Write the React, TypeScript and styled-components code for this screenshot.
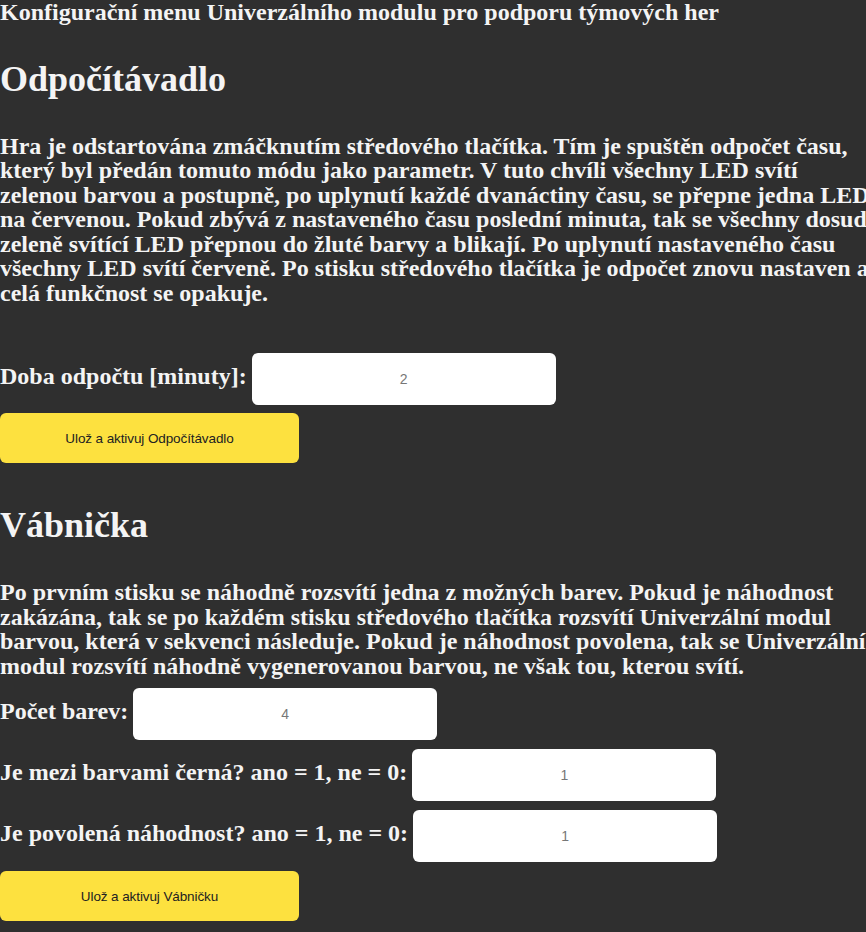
import React, { useState } from 'react';
import styled, { createGlobalStyle } from 'styled-components';

const GlobalStyle = createGlobalStyle`
  html, body {
    margin: 0;
    padding: 0;
    overflow: hidden;
    background: #2f2f2f;
  }
`;

const Page = styled.div`
  width: 874px;
  color: #f4f4f4;
  font-family: "Liberation Serif", "Times New Roman", serif;
  font-weight: bold;
  font-size: 24px;
  line-height: 24.5px;
`;

const Title = styled.div`
  margin-top: 0;
`;

const Section = styled.section<{ $gap: number }>`
  display: flex;
  flex-direction: column;
  align-items: flex-start;
  margin-top: ${p => p.$gap}px;
`;

const Heading = styled.h1`
  margin: 0;
  font-size: 36px;
  line-height: 36px;
`;

const Text = styled.p<{ $after: number }>`
  margin: 37px 0 ${p => p.$after}px;
`;

const Form = styled.div<{ $gap: number }>`
  display: flex;
  flex-direction: column;
  align-items: flex-start;
  gap: ${p => p.$gap}px;
`;

const Row = styled.label`
  display: flex;
  align-items: center;
  gap: 5px;
`;

const Label = styled.span`
  padding-bottom: 6px;
  white-space: nowrap;
`;

const Field = styled.input`
  width: 304px;
  height: 52px;
  box-sizing: border-box;
  border: none;
  border-radius: 6px;
  background: #fff;
  color: #777;
  font-family: "Liberation Sans", Arial, sans-serif;
  font-size: 14px;
  text-align: center;
  outline: none;
`;

const SaveButton = styled.button`
  width: 299px;
  height: 50px;
  border: none;
  border-radius: 6px;
  background: #fde13f;
  color: #222;
  font-family: "Liberation Sans", Arial, sans-serif;
  font-size: 13.5px;
  letter-spacing: -0.1px;
  cursor: pointer;
`;

type FieldDef = { label: string; value: string };

const FormBlock: React.FC<{ fields: FieldDef[]; button: string; gap: number }> = ({
  fields,
  button,
  gap,
}) => {
  const [values, setValues] = useState(fields.map(f => f.value));
  return (
    <Form $gap={gap}>
      {fields.map((f, i) => (
        <Row key={f.label}>
          <Label>{f.label}</Label>
          <Field
            value={values[i]}
            onChange={e => {
              const next = [...values];
              next[i] = e.target.value;
              setValues(next);
            }}
          />
        </Row>
      ))}
      <SaveButton>{button}</SaveButton>
    </Form>
  );
};

const App: React.FC = () => (
  <Page>
    <GlobalStyle />
    <Title>Konfigurační menu Univerzálního modulu pro podporu týmových her</Title>

    <Section $gap={36}>
      <Heading>Odpočítávadlo</Heading>
      <Text $after={48}>
        Hra je odstartována zmáčknutím středového tlačítka. Tím je spuštěn odpočet času, který byl
        předán tomuto módu jako parametr. V tuto chvíli všechny LED svítí zelenou barvou a postupně,
        po uplynutí každé dvanáctiny času, se přepne jedna LED na červenou. Pokud zbývá z
        nastaveného času poslední minuta, tak se všechny dosud zeleně svítící LED přepnou do žluté
        barvy a blikají. Po uplynutí nastaveného času všechny LED svítí červeně. Po stisku
        středového tlačítka je odpočet znovu nastaven a celá funkčnost se opakuje.
      </Text>
      <FormBlock
        gap={8}
        fields={[{ label: 'Doba odpočtu [minuty]:', value: '2' }]}
        button="Ulož a aktivuj Odpočítávadlo"
      />
    </Section>

    <Section $gap={44}>
      <Heading>Vábnička</Heading>
      <Text $after={10}>
        Po prvním stisku se náhodně rozsvítí jedna z možných barev. Pokud je náhodnost zakázána, tak
        se po každém stisku středového tlačítka rozsvítí Univerzální modul barvou, která v sekvenci
        následuje. Pokud je náhodnost povolena, tak se Univerzální modul rozsvítí náhodně
        vygenerovanou barvou, ne však tou, kterou svítí.
      </Text>
      <FormBlock
        gap={9}
        fields={[
          { label: 'Počet barev:', value: '4' },
          { label: 'Je mezi barvami černá? ano = 1, ne = 0:', value: '1' },
          { label: 'Je povolená náhodnost? ano = 1, ne = 0:', value: '1' },
        ]}
        button="Ulož a aktivuj Vábničku"
      />
    </Section>
  </Page>
);

export default App;
